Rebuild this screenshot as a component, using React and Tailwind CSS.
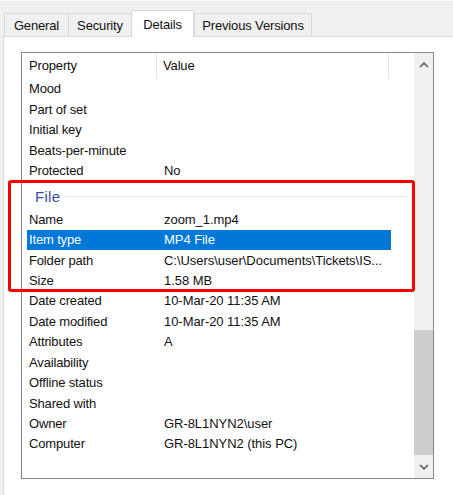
import React from 'react';

const tabs = [
  { label: 'General', w: 'w-[64px]' },
  { label: 'Security', w: 'w-[63px]' },
  { label: 'Details', w: 'w-[63px]', active: true },
  { label: 'Previous Versions', w: 'w-[118px]' },
];

const topRows = [
  ['Mood', ''],
  ['Part of set', ''],
  ['Initial key', ''],
  ['Beats-per-minute', ''],
  ['Protected', 'No'],
];

const fileRows = [
  ['Name', 'zoom_1.mp4'],
  ['Item type', 'MP4 File', true],
  ['Folder path', 'C:\\Users\\user\\Documents\\Tickets\\IS...'],
  ['Size', '1.58 MB'],
  ['Date created', '10-Mar-20 11:35 AM'],
  ['Date modified', '10-Mar-20 11:35 AM'],
  ['Attributes', 'A'],
  ['Availability', ''],
  ['Offline status', ''],
  ['Shared with', ''],
  ['Owner', 'GR-8L1NYN2\\user'],
  ['Computer', 'GR-8L1NYN2 (this PC)'],
];

const Row = ({ name, value, selected }) => (
  <div
    className={`flex h-[20.45px] items-center ml-[5px] w-[364px] ${
      selected ? 'bg-[#0078d7] text-white' : 'text-[#111]'
    }`}
  >
    <div className="w-[137px] pl-[2px] whitespace-nowrap">{name}</div>
    <div className="whitespace-nowrap tracking-[-0.05px]">{value}</div>
  </div>
);

const Chevron = ({ down }) => (
  <svg width="10" height="6" viewBox="0 0 10 6" className={down ? 'rotate-180' : ''}>
    <path d="M1 5 L5 1.2 L9 5" fill="none" stroke="#606060" strokeWidth="1.6" />
  </svg>
);

export default function App() {
  return (
    <div
      className="relative w-[453px] h-[495px] overflow-hidden bg-[#f0f0f0] text-[13px] tracking-[-0.15px]"
      style={{ fontFamily: '"Liberation Sans", Arial, sans-serif' }}
    >
      {/* tab strip */}
      <div className="flex items-end h-[36px] pl-[4px] pt-[2px] border-t border-[#fafafa]">
        {tabs.map((t) =>
          t.active ? (
            <div
              key={t.label}
              className={`${t.w} h-[27px] -mb-px relative z-10 bg-white border border-b-0 border-[#d9d9d9] flex items-start pt-[4px] justify-center text-[#111]`}
            >
              {t.label}
            </div>
          ) : (
            <div
              key={t.label}
              className={`${t.w} h-[23px] bg-[#f0f0f0] border border-b-0 border-r-0 last:border-r border-[#d9d9d9] flex items-center justify-center pt-[1px] text-[#111]`}
            >
              {t.label}
            </div>
          )
        )}
      </div>

      {/* panel */}
      <div className="ml-[3px] h-[460px] bg-white border-l border-t border-[#d9d9d9] pt-[15px] pl-[17px]">
        <div className="w-[413px] h-[427px] border border-[#828790] flex">
          <div className="flex-1 flex flex-col">
            {/* header */}
            <div className="flex h-[26px] items-center">
              <div className="w-[135px] h-[25px] flex items-center pl-[7px] border-r border-[#e5e5e5] text-[#111]">
                Property
              </div>
              <div className="w-[232px] h-[25px] flex items-center pl-[6px] border-r border-[#e5e5e5] text-[#111]">
                Value
              </div>
            </div>

            {topRows.map(([n, v]) => (
              <Row key={n} name={n} value={v} />
            ))}

            {/* group header */}
            <div className="flex items-center h-[28px] pl-[13px] pr-[8px]">
              <span className="text-[15px] tracking-[0.3px] text-[#3b4f9c] mr-[5px] pt-[4px]">File</span>
              <div className="flex-1 h-px bg-[#e2e8f0] mt-[2px]" />
            </div>

            {fileRows.map(([n, v, s]) => (
              <Row key={n} name={n} value={v} selected={s} />
            ))}
          </div>

          {/* scrollbar */}
          <div className="w-[19px] bg-[#f0f0f0] flex flex-col">
            <div className="h-[23px] flex items-center justify-center">
              <Chevron />
            </div>
            <div className="h-[254px]" />
            <div className="h-[125px] bg-[#cdcdcd]" />
            <div className="flex-1 flex items-center justify-center">
              <Chevron down />
            </div>
          </div>
        </div>
      </div>

      {/* annotation */}
      <div className="absolute left-[8px] top-[180px] w-[407px] h-[112px] border-[3px] border-[#ff0000] rounded-[3px]" />
    </div>
  );
}
